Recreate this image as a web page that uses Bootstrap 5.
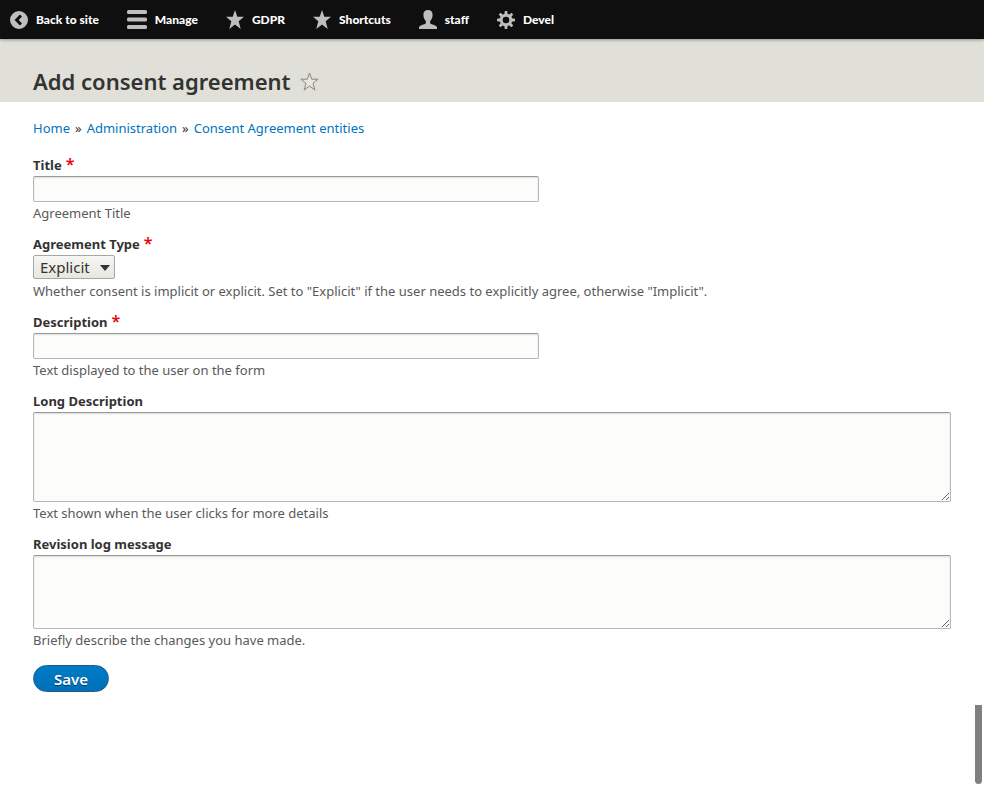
<!DOCTYPE html>
<html lang="en">
<head>
<meta charset="utf-8">
<meta name="viewport" content="width=device-width, initial-scale=1">
<title>Add consent agreement</title>
<link href="https://cdn.jsdelivr.net/npm/bootstrap@5.3.0/dist/css/bootstrap.min.css" rel="stylesheet">
<style>
body { font-family: "Noto Sans", "Open Sans", sans-serif; font-size: 13px; line-height: 20px; color: #333; background: #fff; }
.admin-bar { background: #0f0f0f; min-height: 39px; gap: 28px; padding: 0 10px; box-shadow: 0 1px 3px rgba(0,0,0,.35); }
.admin-bar a { color: #fff; font: 900 12px/38px Lato, "Open Sans", sans-serif; gap: 8px; }
.admin-bar svg { fill: #bebebe; flex: none; }
.page-head { background: #e0e0d8; padding: 27px 33px 6px; gap: 9px; }
.page-head h1 { font-size: 22px; line-height: 30px; font-weight: 600; color: #333; }
.star-btn { line-height: 0; }
.page-body { padding: 16px 33px 40px; }
.trail { margin-bottom: 17px; }
.trail a { color: #0074bd; }
.trail li + li::before { content: "»"; margin: 0 5px; color: #333; }
.field { margin-bottom: 11px; }
.field-label { display: block; font-weight: 700; color: #333; margin-bottom: 1px; }
.req { color: #ee0011; font-size: 16px; font-weight: 600; line-height: 1px; margin-left: 4px; }
.hint { color: #595959; margin-top: 1px; }
.form-control.entry { background: #fcfcfa; border: 1px solid #b8b8b8; border-top-color: #999; border-radius: 2px; box-shadow: inset 0 1px 2px rgba(0,0,0,.13); padding: 2px 7px; font-size: 14px; line-height: 20px; }
.entry-line { max-width: 506px; }
.area-long { height: 90px; }
.area-log { height: 74px; }
.pick { width: 82px; height: 24px; margin-bottom: 1px; padding: 0 20px 0 6px; font-size: 15px; line-height: 20px; color: #333; border: 1px solid #a6a6a6; border-radius: 2px; appearance: none; background: linear-gradient(#f6f6f3, #e7e7df); }
.pick-wrap::after { content: ""; position: absolute; right: 5px; top: 10px; border: 5px solid transparent; border-top: 6px solid #333; border-bottom: 0; pointer-events: none; }
.save-btn { height: 27px; margin-top: 15px; padding: 0 20px; border: 1px solid #1e5c90; border-radius: 20px; color: #fff; background: linear-gradient(#007bc6, #0071b8); font-size: 15px; line-height: 24px; font-weight: 600; text-shadow: 0 1px rgba(0,0,0,.5); }
.scroll-thumb { right: 2px; bottom: 2px; width: 7px; height: 79px; background: #808080; border-radius: 0 0 4px 4px; }
</style>
<script src="https://cdn.jsdelivr.net/npm/bootstrap@5.3.0/dist/js/bootstrap.bundle.min.js"></script>
</head>
<body>
<nav class="admin-bar position-relative d-flex flex-wrap align-items-center" aria-label="Administration toolbar">
  <a href="#" class="d-flex align-items-center text-decoration-none"><svg width="18" height="18" viewBox="0 0 18 18"><path fill-rule="evenodd" d="M9 0a9 9 0 1 1 0 18A9 9 0 0 1 9 0zM9.900 3.600 4.600 9l5.300 5.400 2.100-2L8.700 9 12 5.600z"/></svg>Back to site</a>
  <a href="#" class="d-flex align-items-center text-decoration-none"><svg width="20" height="19" viewBox="0 0 20 19"><rect width="20" height="4" rx="1.500"/><rect y="7.500" width="20" height="4" rx="1.500"/><rect y="15" width="20" height="4" rx="1.500"/></svg>Manage</a>
  <a href="#" class="d-flex align-items-center text-decoration-none"><svg width="18" height="19" viewBox="0 0 18 19"><path d="M9 0l2.300 6.800H18l-5.300 4.400 2 7.800L9 14.600 3.300 19l2-7.800L0 6.800h6.700z"/></svg>GDPR</a>
  <a href="#" class="d-flex align-items-center text-decoration-none"><svg width="18" height="19" viewBox="0 0 18 19"><path d="M9 0l2.300 6.800H18l-5.300 4.400 2 7.800L9 14.600 3.300 19l2-7.800L0 6.800h6.700z"/></svg>Shortcuts</a>
  <a href="#" class="d-flex align-items-center text-decoration-none"><svg width="18" height="19" viewBox="0 0 18 19"><path d="M9 0c3 0 4.600 1.900 4.600 4.800 0 2.600-.9 4.900-2.400 6.300v2.300c1 1 6.800 1.500 6.800 4.200V19H0v-1.400c0-2.700 5.800-3.200 6.800-4.200v-2.300C5.300 9.700 4.400 7.400 4.400 4.800 4.400 1.900 6 0 9 0z"/></svg>staff</a>
  <a href="#" class="d-flex align-items-center text-decoration-none"><svg width="18" height="18" viewBox="0 0 18 18"><path fill-rule="evenodd" d="M9 2.700a6.300 6.300 0 1 1 0 12.600A6.300 6.300 0 0 1 9 2.700zM9 5.700a3.300 3.300 0 1 0 0 6.600 3.300 3.300 0 0 0 0-6.600z"/><g id="teeth"><path d="M7.800 0h2.400l.5 3.500H7.300zM7.800 18h2.400l.5-3.500H7.300zM0 7.800v2.400l3.500.5V7.300zM18 7.800v2.400l-3.500.5V7.300z"/></g><use href="#teeth" transform="rotate(45 9 9)"/></svg>Devel</a>
</nav>
<header class="page-head d-flex align-items-center">
  <h1 class="m-0">Add consent agreement</h1>
  <button type="button" class="star-btn border-0 bg-transparent p-0" aria-label="Add to shortcuts"><svg width="19" height="19" viewBox="0 0 19 19"><path d="M9.500 1l2.200 6.200h6.400l-5.100 4.100 1.900 6.700-5.400-4-5.400 4 1.900-6.700L.9 7.200h6.400z" fill="#e6e6df" stroke="#85857a"/></svg></button>
</header>
<main class="page-body">
  <nav aria-label="Breadcrumb"><ol class="trail list-unstyled d-flex flex-wrap">
    <li><a href="#" class="text-decoration-none">Home</a></li><li><a href="#" class="text-decoration-none">Administration</a></li><li><a href="#" class="text-decoration-none">Consent Agreement entities</a></li>
  </ol></nav>
  <form>
    <div class="field"><label class="field-label" for="f-title">Title<span class="req">*</span></label><input type="text" id="f-title" class="form-control entry entry-line"><div class="hint">Agreement Title</div></div>
    <div class="field"><label class="field-label" for="f-type">Agreement Type<span class="req">*</span></label><div class="pick-wrap position-relative d-table"><select id="f-type" class="pick d-block"><option>Explicit</option><option>Implicit</option></select></div><div class="hint">Whether consent is implicit or explicit. Set to "Explicit" if the user needs to explicitly agree, otherwise "Implicit".</div></div>
    <div class="field"><label class="field-label" for="f-desc">Description<span class="req">*</span></label><input type="text" id="f-desc" class="form-control entry entry-line"><div class="hint">Text displayed to the user on the form</div></div>
    <div class="field"><label class="field-label" for="f-long">Long Description</label><textarea id="f-long" class="form-control entry area-long"></textarea><div class="hint">Text shown when the user clicks for more details</div></div>
    <div class="field"><label class="field-label" for="f-log">Revision log message</label><textarea id="f-log" class="form-control entry area-log"></textarea><div class="hint">Briefly describe the changes you have made.</div></div>
    <button type="submit" class="save-btn d-block">Save</button>
  </form>
</main>
<div class="scroll-thumb position-fixed" aria-hidden="true"></div>
</body>
</html>
